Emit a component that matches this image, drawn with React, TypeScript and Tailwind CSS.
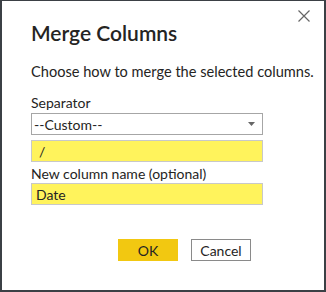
import React from "react";

export default function App() {
  const font = { fontFamily: 'Lato, "Liberation Sans", sans-serif' };
  return (
    <div
      className="relative w-[326px] h-[292px] bg-white border-t border-l-2 border-r-2 border-b-2 border-[#3b4045] text-[#252423]"
      style={font}
    >
      <button className="absolute right-[13px] top-[8px] w-[14px] h-[14px] flex items-center justify-center">
        <svg width="12" height="12" viewBox="0 0 12 12">
          <path d="M0.5 0.5 L11.5 11.5 M11.5 0.5 L0.5 11.5" stroke="#666" strokeWidth="1.2" fill="none" />
        </svg>
      </button>
      <div className="pl-[29px] pr-[61px] pt-[17px] whitespace-nowrap">
        <div className="text-[21px] leading-[30px] font-semibold">Merge Columns</div>
        <div className="mt-[15px] text-[14.6px] leading-[18px] text-[#252423]">
          Choose how to merge the selected columns.
        </div>
        <div className="mt-[13px] text-[14px] leading-[18px]">Separator</div>
        <div className="mt-[1px] h-[22px] border border-[#a6a6a6] flex items-center justify-between pl-[2px] pr-[7px] text-[14px]">
          <span>--Custom--</span>
          <svg width="7" height="4" viewBox="0 0 7 4">
            <path d="M0 0 H7 L3.5 4 Z" fill="#666" />
          </svg>
        </div>
        <div className="mt-[5px] h-[22px] border border-[#c8c8c8] bg-[#fff35c] flex items-center pl-[7px] text-[14px]">
          /
        </div>
        <div className="mt-[3px] text-[14px] leading-[18px]">New column name (optional)</div>
        <div className="mt-[0px] h-[22px] border border-[#c8c8c8] bg-[#fff35c] flex items-center pl-[4px] text-[14px]">
          Date
        </div>
        <div className="mt-[34px] flex pl-[87px] gap-[13px]">
          <button className="w-[60px] h-[22px] bg-[#f2c811] text-[14px] text-[#252423] flex items-center justify-center">
            OK
          </button>
          <button className="w-[60px] h-[22px] border border-[#8a8a8a] bg-white text-[14px] text-[#252423] flex items-center justify-center">
            Cancel
          </button>
        </div>
      </div>
    </div>
  );
}
